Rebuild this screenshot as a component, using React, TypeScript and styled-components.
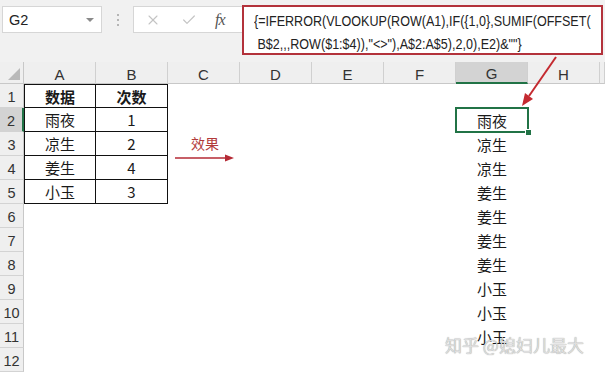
import React from 'react';
import styled, { createGlobalStyle, css } from 'styled-components';
import { X, Check } from 'lucide-react';

const GlobalStyle = createGlobalStyle`
    html, body {
        margin: 0;
        padding: 0;
        background: #fff;
    }
    body {
        font-family: "Liberation Sans", "Noto Sans CJK SC", sans-serif;
    }
`;

const Frame = styled.div`
    position: relative;
    width: 605px;
    height: 372px;
    overflow: hidden;
    background: #fff;
`;

const Toolbar = styled.div`
    display: flex;
    align-items: flex-start;
    height: 62px;
    padding-top: 6px;
    box-sizing: border-box;
    background: #f1f1f1;
`;

const NameBox = styled.div`
    display: flex;
    align-items: center;
    justify-content: space-between;
    margin-left: 2px;
    width: 100px;
    height: 27px;
    box-sizing: border-box;
    padding: 0 7px 0 6px;
    background: #fff;
    border: 1px solid #d6d6d6;
    font-size: 14.5px;
    color: #222;
`;

const Caret = styled.span`
    width: 0;
    height: 0;
    border-left: 4px solid transparent;
    border-right: 4px solid transparent;
    border-top: 4px solid #8a8a8a;
`;

const Grip = styled.div`
    width: 31px;
    height: 27px;
    display: flex;
    flex-direction: column;
    align-items: center;
    justify-content: center;
    gap: 3px;
`;

const GripDot = styled.span`
    width: 2px;
    height: 2px;
    background: #b5b5b5;
`;

const FuncBox = styled.div`
    display: flex;
    align-items: center;
    width: 109px;
    height: 27px;
    box-sizing: border-box;
    padding-left: 11px;
    gap: 20px;
    background: #fff;
    border: 1px solid #d6d6d6;
    border-right: none;
    color: #c4c4c4;
`;

const Fx = styled.span`
    margin-left: -2px;
    font-family: "Liberation Serif", serif;
    font-style: italic;
    font-size: 16px;
    color: #555;
    letter-spacing: -1px;
`;

const FormulaBox = styled.div`
    margin-top: -1px;
    width: 361px;
    height: 50px;
    box-sizing: border-box;
    padding: 2px 6px 0 10px;
    overflow: hidden;
    background: #fff;
    border: 2px solid #b3323b;
`;

// the formula font in the shot is a narrow face; squeeze Liberation Sans to match
const FormulaText = styled.div`
    width: 420px;
    transform: scaleX(0.81);
    transform-origin: left top;
    font-family: "Liberation Sans", sans-serif;
    font-size: 15.5px;
    line-height: 23px;
    color: #222;
    white-space: pre;
`;

const Sheet = styled.div`
    display: grid;
    grid-template-columns: 24px repeat(8, 72px) 1fr;
    grid-template-rows: 22px repeat(12, 24px);
    font-size: 15px;
    color: #222;
`;

const Corner = styled.div`
    position: relative;
    background: #efefef;
    border-right: 1px solid #c8c8c8;
    border-bottom: 1px solid #c8c8c8;
    box-sizing: border-box;

    &::after {
        content: '';
        position: absolute;
        right: 3px;
        bottom: 3px;
        border-left: 12px solid transparent;
        border-bottom: 12px solid #b9b9b9;
    }
`;

const ColHeader = styled.div<{ $active?: boolean }>`
    display: flex;
    align-items: center;
    justify-content: center;
    box-sizing: border-box;
    padding-top: 3px;
    background: #efefef;
    border-right: 1px solid #d0d0d0;
    border-bottom: 1px solid #c8c8c8;
    font-size: 15px;
    color: #333;
    ${p =>
        p.$active &&
        css`
            background: #d3d3d3;
            border-bottom: 2px solid #217346;
        `}
`;

const RowHeader = styled.div<{ $active?: boolean }>`
    display: flex;
    align-items: center;
    justify-content: center;
    box-sizing: border-box;
    padding-top: 2px;
    background: #efefef;
    border-right: 1px solid #c8c8c8;
    border-bottom: 1px solid #d3d3d3;
    font-size: 14.5px;
    color: #333;
    ${p =>
        p.$active &&
        css`
            background: #d3d3d3;
            border-right: 2px solid #217346;
        `}
`;

const Cell = styled.div<{
    $boxed?: boolean;
    $top?: boolean;
    $left?: boolean;
    $bold?: boolean;
    $selected?: boolean;
}>`
    position: relative;
    display: flex;
    align-items: center;
    justify-content: center;
    box-sizing: border-box;
    font-family: "Noto Sans CJK SC", sans-serif;
    font-size: 15px;
    font-weight: ${p => (p.$bold ? 700 : 400)};
    color: #1a1a1a;
    ${p =>
        p.$boxed &&
        css`
            border-right: 1px solid #111;
            border-bottom: 1px solid #111;
        `}
    ${p => p.$top && 'border-top: 1px solid #111;'}
    ${p => p.$left && 'border-left: 1px solid #111;'}
    ${p =>
        p.$selected &&
        css`
            outline: 2px solid #217346;
            outline-offset: -1px;
        `}
`;

const FillHandle = styled.span`
    position: absolute;
    right: -4px;
    bottom: -4px;
    width: 5px;
    height: 5px;
    background: #217346;
    border: 1px solid #fff;
`;

const Overlay = styled.svg`
    position: absolute;
    left: 0;
    top: 0;
    pointer-events: none;
`;

const Callout = styled.div`
    position: absolute;
    left: 175px;
    top: 135px;
    width: 60px;
    display: flex;
    flex-direction: column;
`;

const CalloutText = styled.span`
    padding-left: 16px;
    font-family: "Noto Sans CJK SC", sans-serif;
    font-size: 14px;
    line-height: 16px;
    color: #b23a3a;
`;

const Watermark = styled.div`
    position: absolute;
    left: 445px;
    top: 332px;
    font-family: "Noto Sans CJK SC", sans-serif;
    font-size: 17px;
    color: #dedede;
    text-shadow: 0 0 1px rgba(0, 0, 0, 0.45);
    white-space: nowrap;
`;

const COLS = ['A', 'B', 'C', 'D', 'E', 'F', 'G', 'H', ''];

const table: Record<number, [string, string]> = {
    1: ['数据', '次数'],
    2: ['雨夜', '1'],
    3: ['凉生', '2'],
    4: ['姜生', '4'],
    5: ['小玉', '3'],
};

const result: Record<number, string> = {
    2: '雨夜',
    3: '凉生',
    4: '凉生',
    5: '姜生',
    6: '姜生',
    7: '姜生',
    8: '姜生',
    9: '小玉',
    10: '小玉',
    11: '小玉',
};

const App = () => {
    const rows = Array.from({ length: 12 }, (_, i) => i + 1);

    return (
        <Frame>
            <GlobalStyle />
            <Toolbar>
                <NameBox>
                    G2
                    <Caret />
                </NameBox>
                <Grip>
                    <GripDot />
                    <GripDot />
                    <GripDot />
                </Grip>
                <FuncBox>
                    <X size={16} strokeWidth={1.6} />
                    <Check size={16} strokeWidth={1.8} />
                    <Fx>fx</Fx>
                </FuncBox>
                <FormulaBox>
                    <FormulaText>
                        <div>{'{=IFERROR(VLOOKUP(ROW(A1),IF({1,0},SUMIF(OFFSET('}</div>
                        <div>{' B$2,,,ROW($1:$4)),"<>"),A$2:A$5),2,0),E2)&""}'}</div>
                    </FormulaText>
                </FormulaBox>
            </Toolbar>

            <Sheet>
                <Corner />
                {COLS.map((c, i) => (
                    <ColHeader key={i} $active={c === 'G'}>
                        {c}
                    </ColHeader>
                ))}
                {rows.map(r => (
                    <React.Fragment key={r}>
                        <RowHeader $active={r === 2}>{r}</RowHeader>
                        {COLS.map((c, i) => {
                            const inTable = !!table[r] && i < 2;
                            let text = '';
                            if (inTable) text = table[r][i];
                            if (c === 'G' && result[r]) text = result[r];
                            const selected = c === 'G' && r === 2;
                            return (
                                <Cell
                                    key={i}
                                    $boxed={inTable}
                                    $top={inTable && r === 1}
                                    $left={inTable && i === 0}
                                    $bold={inTable && r === 1}
                                    $selected={selected}
                                >
                                    {text}
                                    {selected && <FillHandle />}
                                </Cell>
                            );
                        })}
                    </React.Fragment>
                ))}
            </Sheet>

            <Callout>
                <CalloutText>效果</CalloutText>
                <svg width="60" height="10" style={{ marginTop: 2 }}>
                    <line x1="0" y1="5" x2="52" y2="5" stroke="#b52a35" strokeWidth="1.5" />
                    <polygon points="59,5 50,1.5 50,8.5" fill="#b52a35" />
                </svg>
            </Callout>

            <Overlay width="605" height="372">
                <line x1="556" y1="57" x2="529" y2="96" stroke="#c42a30" strokeWidth="2" />
                <polygon points="522,106 533,99 525,93" fill="#c42a30" />
            </Overlay>

            <Watermark>知乎 @媳妇儿最大</Watermark>
        </Frame>
    );
};

export default App;
